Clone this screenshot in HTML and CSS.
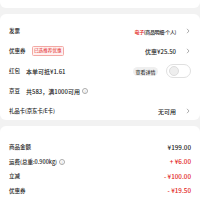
FILE: index.html
```html
<!DOCTYPE html>
<html lang="zh">
<head>
<meta charset="utf-8">
<link rel="stylesheet" href="styles.css">
</head>
<body>
<div class="prev"></div>
<div class="card card-opts">
  <div class="row">
    <span class="label">发票</span>
    <span class="value tight"><span class="red">电子</span>(商品明细-个人)</span>
    <svg class="chev" viewBox="0 0 4 6"><path d="M1 0.8 L3 3 L1 5.2" fill="none" stroke="#999" stroke-width="0.8"/></svg>
  </div>
  <div class="row">
    <span class="label">优惠券</span>
    <span class="badge">已选推荐优惠</span>
    <span class="value num">优惠¥25.50</span>
    <svg class="chev" viewBox="0 0 4 6"><path d="M1 0.8 L3 3 L1 5.2" fill="none" stroke="#999" stroke-width="0.8"/></svg>
  </div>
  <div class="row">
    <span class="label">红包</span>
    <span class="desc">本单可抵¥1.61</span>
    <span class="btn">查看详情</span>
    <span class="toggle"><span class="knob"></span></span>
  </div>
  <div class="row">
    <span class="label">京豆</span>
    <span class="desc">共583，满1000可用</span>
    <span class="info">i</span>
  </div>
  <div class="row">
    <span class="label tight2">礼品卡(京东卡/E卡)</span>
    <span class="value num">无可用</span>
    <svg class="chev" viewBox="0 0 4 6"><path d="M1 0.8 L3 3 L1 5.2" fill="none" stroke="#999" stroke-width="0.8"/></svg>
  </div>
</div>
<div class="card card-sum">
  <div class="srow"><span class="label">商品金额</span><span class="amt">¥199.00</span></div>
  <div class="srow"><span class="label">运费(总重:0.900kg)</span><span class="info">i</span><span class="amt red">+ ¥6.00</span></div>
  <div class="srow"><span class="label">立减</span><span class="amt red">- ¥100.00</span></div>
  <div class="srow"><span class="label">优惠券</span><span class="amt red">- ¥19.50</span></div>
</div>
</body>
</html>
```
FILE: styles.css
```css
* { box-sizing: border-box; }
html, body { margin: 0; padding: 0; }
body {
  background: #f2f2f2;
  font-family: "Noto Sans CJK SC", "Noto Sans", sans-serif;
  font-size: 5.5px;
  font-weight: 500;
  color: #222;
  width: 200px;
  height: 200px;
  overflow: hidden;
}
.prev {
  height: 8px;
  background: #fff;
  border-radius: 0 0 6px 6px;
}
.card {
  background: #fff;
  border-radius: 6px;
  margin-top: 6px;
  padding: 0 9px;
}
.card-opts { padding-top: 7px; padding-bottom: 0; height: 106px; }
.row {
  height: 20px;
  display: flex;
  align-items: center;
}
.label { color: #222; }
.tight { font-size: 5px; letter-spacing: -0.35px; }
.tight2 { letter-spacing: -0.2px; }
.desc { margin-left: 6px; color: #222; font-size: 6px; }
.value { margin-left: auto; color: #222; }
.value.num { font-size: 6px; }
.red { color: #e2231a; }
.chev { width: 4px; height: 6px; margin-left: 10px; margin-right: 1px; }
.badge {
  margin-left: 6px;
  font-size: 4.6px;
  font-weight: 400;
  color: #e2231a;
  background: #fff1f0;
  border: 0.5px solid #f3a9a4;
  border-radius: 1.5px;
  padding: 0 1.5px;
  line-height: 7.5px;
}
.btn {
  margin-left: auto;
  background: #efefef;
  border-radius: 4.5px;
  font-size: 5px;
  line-height: 9px;
  padding: 0 2.5px;
  color: #333;
}
.toggle {
  margin-left: 8px;
  width: 25px;
  height: 14px;
  border: 0.8px solid #e0e0e0;
  border-radius: 7px;
  display: flex;
  align-items: center;
  padding-left: 1.5px;
}
.knob {
  width: 10px;
  height: 10px;
  border-radius: 50%;
  background: #eee;
  border: 0.8px solid #ddd;
}
.info {
  margin-left: 2px;
  width: 6px;
  height: 6px;
  border: 0.6px solid #aaa;
  border-radius: 50%;
  color: #aaa;
  font-size: 4px;
  font-weight: 400;
  line-height: 5px;
  text-align: center;
  font-family: "DejaVu Sans", sans-serif;
}
.card-sum { padding-top: 14px; height: 80px; }
.srow {
  height: 14.5px;
  display: flex;
  align-items: center;
}
.amt { margin-left: auto; margin-right: 0; font-size: 6.3px; }
```
